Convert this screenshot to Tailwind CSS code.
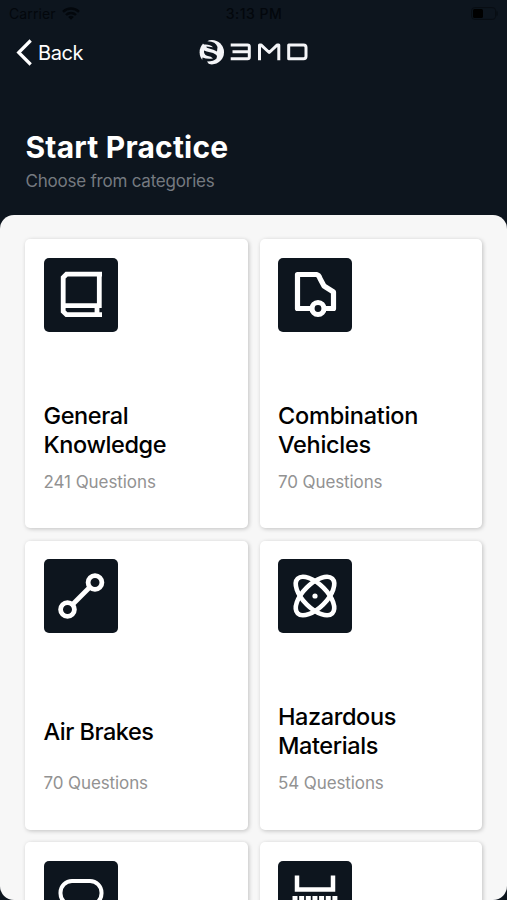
<!DOCTYPE html>
<html lang="en">
<head>
<meta charset="utf-8">
<meta name="viewport" content="width=device-width, initial-scale=1">
<title>Start Practice</title>
<script src="https://cdn.jsdelivr.net/npm/@tailwindcss/browser@4"></script>
</head>
<body class="h-[900px] overflow-hidden bg-[#0d151e] font-['Inter',sans-serif]">
<div class="flex h-full flex-col">
  <div class="grid h-[27px] shrink-0 grid-cols-3 items-center pl-[9px] pr-2 text-[14px] text-[#03070c]">
    <div class="flex items-center gap-[6px]">
      <span class="tracking-[0.1px]">Carrier</span>
      <svg class="h-[13px] w-[18px]" viewBox="0 0 18 13" fill="none" stroke="currentColor" stroke-width="2.4"><path d="M1 4.8a11.5 11.5 0 0 1 16 0M4 8a7.2 7.2 0 0 1 10 0"/><path d="M9 12.8 6.2 10a4 4 0 0 1 5.6 0z" fill="currentColor" stroke="none"/></svg>
    </div>
    <span class="text-center font-medium tracking-[0.5px]">3:13 PM</span>
    <svg class="h-[13px] w-7 justify-self-end" viewBox="0 0 28 13"><rect x=".6" y=".6" width="24" height="11.8" rx="3" fill="none" stroke="#080d13"/><rect x="2" y="2" width="10" height="9" rx="1.5" fill="#000"/><path d="M26 4.5v4" stroke="#080d13" stroke-width="1.4"/></svg>
  </div>
  <div class="grid h-[50px] shrink-0 grid-cols-3 items-center pl-4 text-white">
    <div class="flex items-center gap-[6px]">
      <svg class="h-[27px] w-4" viewBox="0 0 16 27" fill="none" stroke="currentColor" stroke-width="3.2"><path d="M14.7 1.5 2.7 13.5l12 12"/></svg>
      <span class="pt-px text-[20px] tracking-[-0.4px]">Back</span>
    </div>
    <svg class="mr-[14px] h-[26px] w-[110px] justify-self-center" viewBox="0 0 110 26" fill="none" role="img" aria-label="3MD">
      <circle cx="12.8" cy="13.2" r="12.2" fill="#f4f5f8"/>
      <path d="M3 3.500 11-.5 8.500 2.200Q17 2.500 18.500 8L18 12.500Q15 10.500 9.500 9.300 7 8.700 7.500 7.500L14 8.200Q11 5 5 5.500z" fill="#0d151e"/>
      <path d="M5 11.500Q7 12.500 12 13.500 16.500 14.500 18 17L17.500 19.500Q15 22.500 8 22.500L10.500 26 3 22.500 3.500 18.500Q8 20.500 14 19.500 12.500 17.500 8 16.700 4.500 15.500 5 11.500z" fill="#0d151e"/>
      <g stroke="#f4f5f8" stroke-width="3" stroke-linejoin="round"><path d="M31.700 5.900H48.500q1.800 0 1.800 1.800V18q0 1.800-1.800 1.800H31.700M33.500 12.800h16M60.500 21.200V5.900h1.500l8.200 7.600L78.300 5.900h1.500V21.200M89.700 5.900H104.500q2.500 0 2.500 2.500V17.300q0 2.500-2.500 2.500H89.700z"/></g>
    </svg>
  </div>
  <header class="flex h-[138px] shrink-0 flex-col pl-[25.5px] pt-[52px]">
    <h1 class="text-[30px] font-bold leading-9 tracking-[0.2px] text-white">Start Practice</h1>
    <p class="mt-1 text-[17px] leading-6 tracking-[-0.22px] text-[#757a80]">Choose from categories</p>
  </header>
  <main class="h-[685px] shrink-0 overflow-hidden rounded-[14px] bg-[#f7f7f7] px-[25px] pt-[24px]">
    <div class="grid grid-cols-2 gap-x-3 gap-y-[12.5px]">
      <article class="flex h-[289px] flex-col rounded-[5px] bg-white px-[18.5px] pt-[18.5px] shadow-[1px_1px_4px_rgba(0,0,0,0.22)]">
        <svg class="size-[74px] shrink-0 rounded-[5px] bg-[#0d151e]" viewBox="0 0 74 74" fill="none" stroke="#fff" stroke-width="4.8"><path d="M58 16.200H22.500L19.200 19.500V53.500L22.500 56.700H58M55.300 14v33.600H19.500M53 47v9"/></svg>
        <h2 class="mt-[69px] flex h-[58px] items-center text-[23.5px] font-medium leading-[29px] tracking-[-0.4px] text-black"><span>General<br>Knowledge</span></h2>
        <p class="mt-[11px] text-[17px] leading-6 tracking-[-0.07px] text-[#929292]">241 Questions</p>
      </article>
      <article class="flex h-[289px] flex-col rounded-[5px] bg-white px-[18.5px] pt-[18.5px] shadow-[1px_1px_4px_rgba(0,0,0,0.22)]">
        <svg class="size-[74px] shrink-0 rounded-[5px] bg-[#0d151e]" viewBox="0 0 74 74" fill="none" stroke="#fff" stroke-width="5.200" stroke-linejoin="round"><path d="M33 50.500H19.500V16.500H38.500q2.500.5 3.500 4l4 7.500 9.500 6V50.500h-9"/><circle cx="40" cy="50.500" r="6"/></svg>
        <h2 class="mt-[69px] flex h-[58px] items-center text-[23.5px] font-medium leading-[29px] tracking-[-0.2px] text-black"><span>Combination<br><span class="tracking-[-0.3px]">Vehicles</span></span></h2>
        <p class="mt-[11px] text-[17px] leading-6 tracking-[-0.1px] text-[#929292]">70 Questions</p>
      </article>
      <article class="flex h-[289px] flex-col rounded-[5px] bg-white px-[18.5px] pt-[18.5px] shadow-[1px_1px_4px_rgba(0,0,0,0.22)]">
        <svg class="size-[74px] shrink-0 rounded-[5px] bg-[#0d151e]" viewBox="0 0 74 74" fill="none" stroke="#fff" stroke-width="4.800"><circle cx="51" cy="23.500" r="6.900"/><circle cx="23.500" cy="50.500" r="6.900"/><path d="m28.500 45.500 17-17"/></svg>
        <h2 class="mt-[69px] flex h-[58px] items-center text-[23.5px] font-medium leading-[29px] tracking-[-0.5px] text-black">Air Brakes</h2>
        <p class="mt-[11px] text-[17px] leading-6 tracking-[-0.1px] text-[#929292]">70 Questions</p>
      </article>
      <article class="flex h-[289px] flex-col rounded-[5px] bg-white px-[18.5px] pt-[18.5px] shadow-[1px_1px_4px_rgba(0,0,0,0.22)]">
        <svg class="size-[74px] shrink-0 rounded-[5px] bg-[#0d151e]" viewBox="0 0 74 74" fill="none" stroke="#fff" stroke-width="4.600"><ellipse cx="37" cy="37" rx="24.500" ry="11.800" transform="rotate(45 37 37)"/><ellipse cx="37" cy="37" rx="24.500" ry="11.800" transform="rotate(-45 37 37)"/><circle cx="37" cy="37" r="2.600" fill="#fff" stroke="none"/></svg>
        <h2 class="mt-[69px] flex h-[58px] items-center text-[23.5px] font-medium leading-[29px] tracking-[-0.4px] text-black"><span>Hazardous<br>Materials</span></h2>
        <p class="mt-[11px] text-[17px] leading-6 tracking-[-0.1px] text-[#929292]">54 Questions</p>
      </article>
      <article class="flex h-[289px] flex-col rounded-[5px] bg-white px-[18.5px] pt-[18.5px] shadow-[1px_1px_4px_rgba(0,0,0,0.22)]">
        <svg class="size-[74px] shrink-0 rounded-[5px] bg-[#0d151e]" viewBox="0 0 74 74" fill="none" stroke="#fff" stroke-width="4"><rect x="16.500" y="20" width="41" height="24" rx="11.500"/></svg>
      </article>
      <article class="flex h-[289px] flex-col rounded-[5px] bg-white px-[18.5px] pt-[18.5px] shadow-[1px_1px_4px_rgba(0,0,0,0.22)]">
        <svg class="size-[74px] shrink-0 rounded-[5px] bg-[#0d151e]" viewBox="0 0 74 74" fill="none" stroke="#fff" stroke-width="4.500"><path d="M19 14.500v14h36v-14"/><path d="M14.500 37.500h45" stroke-width="5" stroke-dasharray="5 1.650"/></svg>
      </article>
    </div>
  </main>
</div>
</body>
</html>
